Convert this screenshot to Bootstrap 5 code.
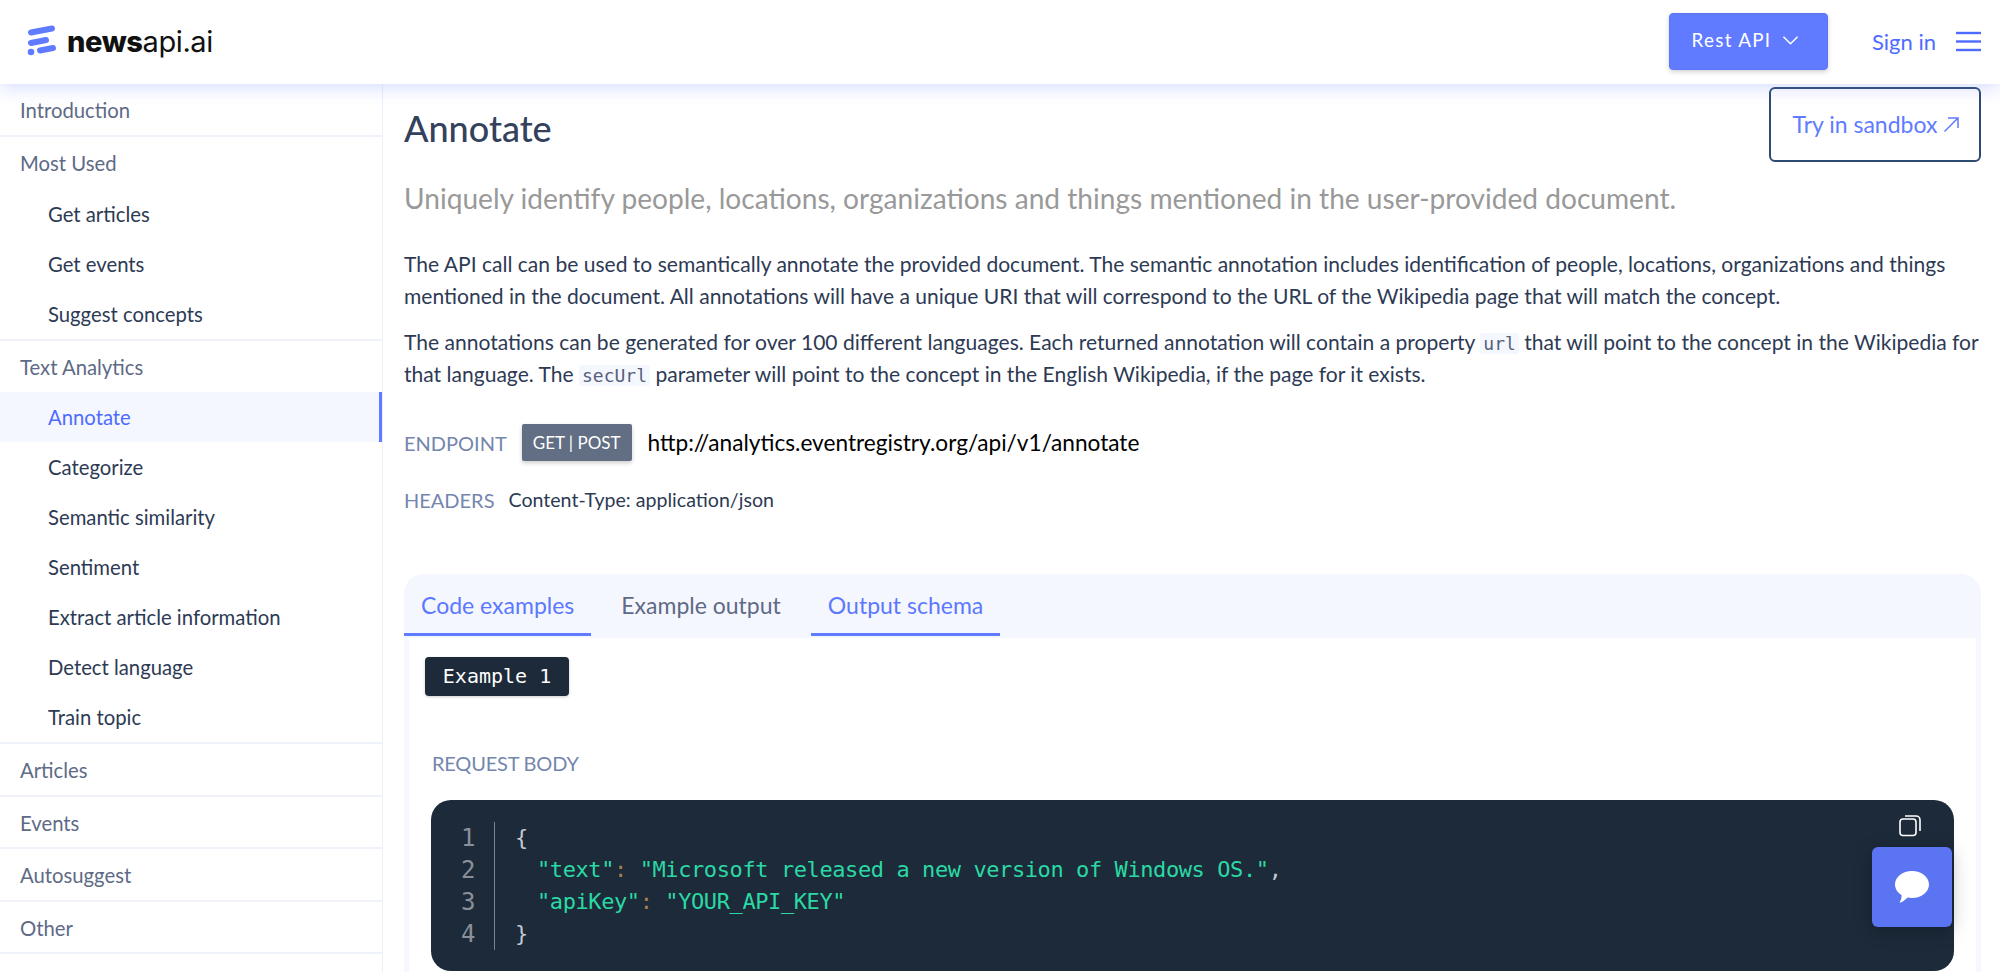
<!DOCTYPE html>
<html lang="en">
<head>
    <meta charset="UTF-8">
    <meta name="viewport" content="width=device-width, initial-scale=1.0">
    <title>Annotate - newsapi.ai</title>
    <link href="https://cdn.jsdelivr.net/npm/bootstrap@5.3.0/dist/css/bootstrap.min.css" rel="stylesheet">
    <style>
        html, body { height: 972px; overflow: hidden; }
        body { font-family: Lato, "Liberation Sans", sans-serif; color: #2d3a54; background: #fff; font-size: 20.3px; }
        .top-bar { height: 84px; background: #fff; box-shadow: 0 4px 16px rgba(96,123,255,.25); position: relative; z-index: 5; padding: 0 19px 2px 27px; }
        .brand-text { font-family: Inter, "Liberation Sans", sans-serif; font-size: 29px; color: #111; letter-spacing: -.4px; margin-left: 10px; line-height: 1; }
        .brand-text b { font-weight: 800; }
        .api-btn { width: 159px; height: 57px; background: #607bff; color: #fff; border: 1px solid #5a75f5; border-radius: 4px; font-size: 18.8px; letter-spacing: 1.3px; box-shadow: 0 2px 5px rgba(0,0,0,.18); margin-right: 44px; padding: 0 6px 1px 0; gap: 11px; }
        .sign-link { color: #4d6cff; font-size: 22px; text-decoration: none; margin-right: 20px; }
        .side-col { width: 383px; height: 888px; border-right: 1px solid #eceffa; flex-shrink: 0; }
        .side-head { display: block; height: 52.5px; line-height: 52px; padding-left: 20px; color: #5e6a86; border-bottom: 2px solid #f0f2f9; text-decoration: none; }
        .side-head.first { height: 53px; }
        .side-group { border-bottom: 2px solid #f0f2f9; }
        .side-group .side-head { border-bottom: 0; height: 51.5px; }
        .side-sub { display: block; height: 50px; line-height: 50px; padding-left: 48px; color: #2d3a54; text-decoration: none; }
        .side-sub.active-item { background: #f5f7ff; color: #4d6cff; border-right: 3px solid #607bff; }
        .main-col { padding: 0 19px 0 21px; flex-grow: 1; position: relative; min-width: 0; }
        .page-title { font-size: 36px; font-weight: 500; color: #34415c; margin: 20px 0 0; line-height: 48px; }
        .page-sub { font-size: 28.1px; color: #999; margin: 26px 0 0; line-height: 40px; }
        .page-text { font-size: 21.05px; line-height: 31.5px; margin: 30px 0 0; color: #2d3a54; }
        .page-text + .page-text { margin-top: 15px; }
        .page-text code { font-family: "DejaVu Sans Mono", monospace; font-size: 18px; line-height: 1; color: #55607a; background: #f5f7ff; padding: 0 3px; border-radius: 3px; }
        .sandbox-btn { position: absolute; top: 3px; right: 19px; width: 212px; height: 75px; border: 2px solid #2f4a73; border-radius: 6px; color: #607bff; font-size: 23px; background: #fff; text-decoration: none; padding-left: 3px; gap: 6px; }
        .info-label { color: #7486ad; font-size: 20px; }
        .endpoint-row { margin-top: 35px; }
        .headers-row { margin-top: 23.5px; gap: 14px; font-size: 19.6px; line-height: 30px; }
        .method-tag { background: #626e84; color: #fff; font-size: 17px; padding: 0 11px; height: 37px; line-height: 37px; border-radius: 2px; box-shadow: 0 2px 4px rgba(0,0,0,.2); margin: 0 16px 0 15px; }
        .endpoint-url { color: #000; font-size: 22.65px; }
        .tabs-box { background: #f5f7ff; border-radius: 20px 20px 0 0; height: 64px; margin-top: 59px; }
        .tab-item { height: 62px; line-height: 62px; padding: 0 17px; font-size: 23px; color: #5e6a86; }
        .tab-blue { color: #5c78ff; border-bottom: 3px solid #607bff; }
        .tab-gap { margin-left: 13px; margin-right: 13px; }
        .tab-gap + .tab-gap { margin-left: 0; }
        .tab-body { border-left: 5px solid #f7f8ff; border-right: 5px solid #f7f8ff; padding: 19px 22px 0 16px; height: 340px; }
        .example-pill { font-family: "DejaVu Sans Mono", monospace; background: #1c2a3a; color: #fff; font-size: 20px; width: 144px; height: 39px; line-height: 39px; text-align: center; border-radius: 4px; box-shadow: 0 1px 3px rgba(0,0,0,.2); }
        .body-label { color: #7486ad; font-size: 20px; margin: 53px 0 0 7px; line-height: 28px; letter-spacing: -.2px; }
        .code-box { margin: 23px 0 0 6px; height: 171px; background: #1c2a3a; border-radius: 20px; padding: 22px 0 0 30px; position: relative; font-family: "DejaVu Sans Mono", monospace; font-size: 22px; line-height: 32.3px; }
        .line-nums { color: #8a9099; width: 34px; border-right: 1px solid #7b8390; height: 128px; margin-right: 20px; flex-shrink: 0; font-size: 24px; }
        .code-lines { color: #2bd9a4; white-space: pre; letter-spacing: -.41px; }
        .code-lines .plain { color: #c3c9d2; }
        .code-lines .colon { color: #a9804d; }
        .code-indent { display: inline-block; width: 22px; }
        .copy-icon { position: absolute; top: 15px; right: 33px; }
        .chat-btn { position: absolute; top: 847px; left: 1872px; width: 80px; height: 80px; background: #5b74f2; border-radius: 6px; box-shadow: 0 4px 18px rgba(0,0,0,.25); z-index: 6; }
    </style>
</head>
<body>

    <!-- Top navigation -->
    <header class="top-bar d-flex align-items-center justify-content-between">
        <div class="d-flex align-items-center">
            <svg width="30" height="32" viewBox="0 0 30 32">
                <g fill="none" stroke="#607bff" stroke-linecap="round">
                    <path d="M4 7.5 L25 3.5" stroke-width="6"/>
                    <path d="M4 18 L19 15" stroke-width="6"/>
                    <path d="M13 25.5 L26 23" stroke-width="6"/>
                </g>
                <circle cx="4" cy="27" r="3.3" fill="#607bff"/>
            </svg>
            <span class="brand-text"><b>news</b>api.ai</span>
        </div>
        <div class="d-flex align-items-center">
            <button type="button" class="api-btn d-flex align-items-center justify-content-center">Rest API
                <svg width="17" height="11" viewBox="0 0 18 11"><path d="M1.5 1.5 L9 9 L16.500 1.500" fill="none" stroke="#fff" stroke-width="1.600"/></svg>
            </button>
            <a class="sign-link" href="#">Sign in</a>
            <svg width="25" height="21" viewBox="0 0 25 21"><g stroke="#4d6cff" stroke-width="2.400"><path d="M0 2 H25"/><path d="M0 10.500 H25"/><path d="M0 19 H25"/></g></svg>
        </div>
    </header>

    <div class="d-flex">
        <!-- Sidebar -->
        <nav class="side-col">
            <a class="side-head first" href="#">Introduction</a>
            <div class="side-group">
                <a class="side-head" href="#">Most Used</a>
                <a class="side-sub" href="#">Get articles</a>
                <a class="side-sub" href="#">Get events</a>
                <a class="side-sub" href="#">Suggest concepts</a>
            </div>
            <div class="side-group">
                <a class="side-head" href="#">Text Analytics</a>
                <a class="side-sub active-item" href="#">Annotate</a>
                <a class="side-sub" href="#">Categorize</a>
                <a class="side-sub" href="#">Semantic similarity</a>
                <a class="side-sub" href="#">Sentiment</a>
                <a class="side-sub" href="#">Extract article information</a>
                <a class="side-sub" href="#">Detect language</a>
                <a class="side-sub" href="#">Train topic</a>
            </div>
            <a class="side-head" href="#">Articles</a>
            <a class="side-head" href="#">Events</a>
            <a class="side-head" href="#">Autosuggest</a>
            <a class="side-head" href="#">Other</a>
        </nav>

        <!-- Main content -->
        <main class="main-col">
            <a class="sandbox-btn d-flex align-items-center justify-content-center" href="#">Try in sandbox
                <svg width="17" height="17" viewBox="0 0 17 17"><path d="M1.500 15.500 L15 2 M5 2 H15 V12" fill="none" stroke="#607bff" stroke-width="1.500"/></svg>
            </a>
            <h1 class="page-title">Annotate</h1>
            <p class="page-sub">Uniquely identify people, locations, organizations and things mentioned in the user-provided document.</p>

            <p class="page-text">The API call can be used to semantically annotate the provided document. The semantic annotation includes identification of people, locations, organizations and things mentioned in the document. All annotations will have a unique URI that will correspond to the URL of the Wikipedia page that will match the concept.</p>
            <p class="page-text">The annotations can be generated for over 100 different languages. Each returned annotation will contain a property <code>url</code> that will point to the concept in the Wikipedia for that language. The <code>secUrl</code> parameter will point to the concept in the English Wikipedia, if the page for it exists.</p>

            <div class="endpoint-row d-flex align-items-center">
                <span class="info-label">ENDPOINT</span>
                <span class="method-tag">GET | POST</span>
                <span class="endpoint-url">http://analytics.eventregistry.org/api/v1/annotate</span>
            </div>
            <div class="headers-row d-flex align-items-center">
                <span class="info-label">HEADERS</span>
                <span>Content-Type: application/json</span>
            </div>

            <div class="tabs-box d-flex">
                <div class="tab-item tab-blue">Code examples</div>
                <div class="tab-item tab-gap">Example output</div>
                <div class="tab-item tab-blue tab-gap">Output schema</div>
            </div>
            <div class="tab-body">
                <div class="example-pill">Example 1</div>
                <div class="body-label">REQUEST BODY</div>
                <div class="code-box d-flex">
                    <div class="line-nums">1<br>2<br>3<br>4</div>
                    <div class="code-lines"><span class="plain">{</span>
<span class="code-indent"></span>"text"<span class="colon">:</span> "Microsoft released a new version of Windows OS."<span class="plain">,</span>
<span class="code-indent"></span>"apiKey"<span class="colon">:</span> "YOUR_API_KEY"
<span class="plain">}</span></div>
                    <svg class="copy-icon" width="22" height="22" viewBox="0 0 22 22" fill="none" stroke="#fff" stroke-width="1.600">
                        <rect x="1" y="4" width="16" height="16.500" rx="3"/>
                        <path d="M6 1 H17 A4 4 0 0 1 21 5 V16"/>
                    </svg>
                </div>
            </div>
        </main>
    </div>

    <!-- Chat widget -->
    <div class="chat-btn d-flex align-items-center justify-content-center">
        <svg width="36" height="34" viewBox="0 0 36 34"><path d="M18 1 C27.500 1 35 7 35 14.500 C35 22 27.500 28 18 28 C16.500 28 15 27.800 13.600 27.500 C11 30 7.500 33 5.500 32.500 C7 30.500 7.800 27.500 7.500 25 C3.500 22.500 1 18.800 1 14.500 C1 7 8.500 1 18 1 Z" fill="#fff"/></svg>
    </div>

    <script src="https://cdn.jsdelivr.net/npm/bootstrap@5.3.0/dist/js/bootstrap.bundle.min.js"></script>
</body>
</html>
